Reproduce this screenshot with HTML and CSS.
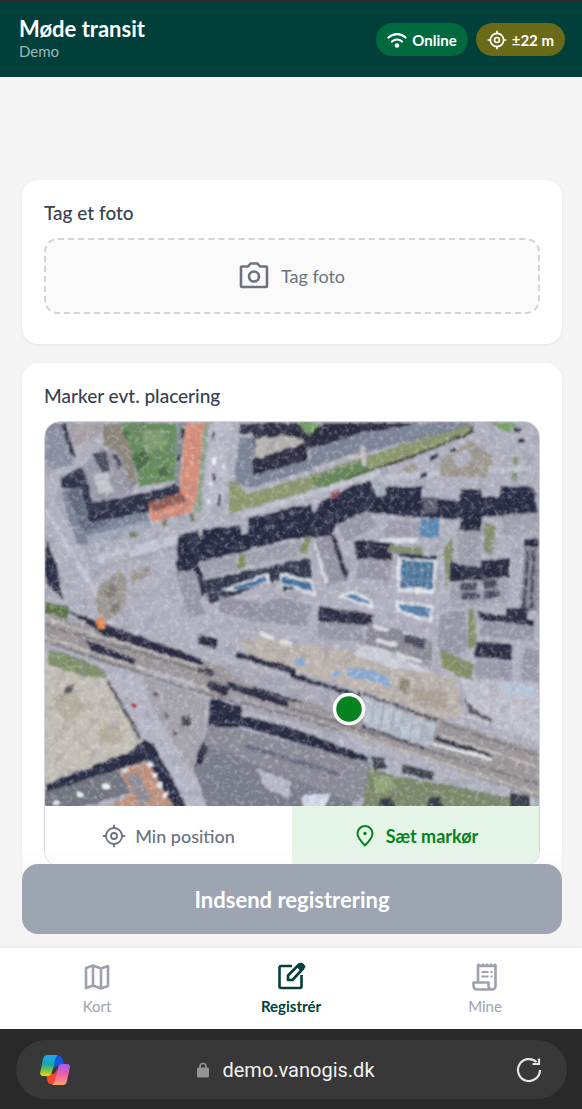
FILE: index.html
```html
<!DOCTYPE html>
<html lang="da">
<head>
    <meta charset="UTF-8">
    <meta name="viewport" content="width=device-width, initial-scale=1.0">
    <title>Møde transit</title>
    <link rel="stylesheet" href="styles.css">
</head>
<body>
    <header class="topbar">
        <div class="topbar-title">
            <h1>Møde transit</h1>
            <p>Demo</p>
        </div>
        <div class="badges">
            <span class="badge badge-online">
                <svg class="badge-icon" viewBox="0 0 20 20" fill="none" stroke="currentColor" stroke-width="2.2" stroke-linecap="round">
                    <path d="M1.5 7.5C6.5 3 13.5 3 18.500 7.500M5 11.500c3-2.700 7-2.700 10 0"/>
                    <circle cx="10" cy="15.500" r="1.200" fill="currentColor"/>
                </svg>
                Online
            </span>
            <span class="badge badge-gps">
                <svg class="badge-icon" viewBox="0 0 24 24" fill="none" stroke="currentColor" stroke-width="2" stroke-linecap="round">
                    <circle cx="12" cy="12" r="8"/><circle cx="12" cy="12" r="3"/>
                    <path d="M12 1.500V4M12 20v2.500M1.500 12H4M20 12h2.500"/>
                </svg>
                ±22 m
            </span>
        </div>
    </header>

    <div class="content">
        <main class="scroll">
            <section class="card card-photo">
                <h2>Tag et foto</h2>
                <button type="button" class="photo-btn">
                    <svg class="photo-icon" viewBox="0 0 30 30" fill="none" stroke="currentColor" stroke-width="2.600" stroke-linejoin="round">
                        <path d="M3 5.500h6l2.500-3h7l2.500 3h6a1 1 0 0 1 1 1V25a1 1 0 0 1-1 1H3a1 1 0 0 1-1-1V6.500a1 1 0 0 1 1-1z"/>
                        <circle cx="15" cy="15.500" r="5"/>
                    </svg>
                    Tag foto
                </button>
            </section>

            <section class="card">
                <h2>Marker evt. placering</h2>
                <div class="map-box">
                    <svg class="map" viewBox="45 422 494 384" preserveAspectRatio="xMidYMid slice" role="img" aria-label="Luftfoto">
                        <defs>
                            <filter id="rough" x="0" y="0" width="100%" height="100%">
                                <feTurbulence type="fractalNoise" baseFrequency="0.12" numOctaves="2" seed="4" result="n"/>
                                <feDisplacementMap in="SourceGraphic" in2="n" scale="4" xChannelSelector="R" yChannelSelector="G" result="d"/>
                                <feGaussianBlur in="d" stdDeviation="0.8"/>
                            </filter>
                            <filter id="grain" x="0" y="0" width="100%" height="100%">
                                <feTurbulence type="fractalNoise" baseFrequency="0.09" numOctaves="4" seed="9"/>
                                <feColorMatrix values="0 0 0 0 0.2  0 0 0 0 0.2  0 0 0 0 0.26  1.8 0 0 0 -0.8"/>
                            </filter>
                            <filter id="light" x="0" y="0" width="100%" height="100%">
                                <feTurbulence type="fractalNoise" baseFrequency="0.2" numOctaves="3" seed="21"/>
                                <feColorMatrix values="0 0 0 0 0.9  0 0 0 0 0.9  0 0 0 0 0.92  2 0 0 0 -0.95"/>
                            </filter>
                        </defs>
                        <g filter="url(#rough)">
                            <rect x="35" y="412" width="514" height="404" fill="#b1b2c0"/>
                            <!-- street lanes -->
                            <path stroke="#c3c5d1" stroke-width="5" fill="none" d="M90 560l90-24M45 510l80 130M130 555l50-14M240 516l140-44M380 478l150-10"/>
                            <path stroke="#a2a3b3" stroke-width="3" fill="none" d="M100 568l80-22M56 500l70 120"/>
                            <!-- north west blocks -->
                            <path fill="#8b91a3" d="M45 423h18l11 42-24 4-5-10z"/>
                            <path fill="#a9a2a9" d="M68 423h32v13l-27 11z"/>
                            <path fill="#33354c" d="M60 423h6l10 35-5-2z"/>
                            <path fill="#8d867a" d="M103 424h22l12 60-10 4-10-36-14-6z"/>
                            <path fill="#668d5b" d="M120 423h57l-2 57-35 7-10-39z"/>
                            <path fill="#809c70" d="M142 430h22l2 16-22 8z"/>
                            <path fill="#4c6a45" d="M130 456l14-6 6 10-12 12zM122 430l8 4-4 6zM158 470l8-4 4 8-10 4z"/>
                            <path fill="#2d3048" d="M60 478l23-11 12 35 55-10 27-10 6 15-33 8v7l-60 13-10-37H60z"/>
                            <path fill="#9a9aaa" d="M83 465l9 37 41-9-13-41-20-4z"/>
                            <path fill="#4b4b5c" d="M92 453l14-2 4 18-8 4zM112 455l6 14 5-2-5-14z"/>
                            <path fill="#c4c4cc" d="M94 474l14-2 5 20-15 3z"/>
                            <path fill="#7b8598" d="M60 492l20-5 10 36 57-11 3 16-63 17-10-2z"/>
                            <path fill="#9fa9b9" d="M90 535l58-14 2 7-63 17z"/>
                            <path fill="#646b7d" d="M66 491l13-3 9 34 20-3-2 6-22 8z"/>
                            <path fill="#7f8e92" d="M177 423h8l-6 65-4-2z"/>
                            <path fill="#d98f79" d="M185 423h19l-7 75-5 14-40 10-3-19 31-10z"/>
                            <path fill="#8f5d56" d="M149 502l33-9 5 8-34 11z"/>
                            <path fill="#8aa48a" d="M204 423h5l-9 90-6-1 4-20z"/>
                            <path fill="#bcbdca" d="M211 423h22l-10 80-20 10z"/>
                            <path fill="#2a2c3c" d="M212 474h3v7h-3zM218 494h3v12h-3zM181 430h3v8h-3zM178 454h3v7h-3zM213 432h2v6h-2z"/>
                            <path fill="#f2f3f6" d="M212 457h4v8h-4zM209 483h3v5h-3zM222 464h3v5h-3zM207 499h3v5h-3z"/>
                            <path fill="#76805f" d="M162 520l5-1 2 8-6 1zM188 514l6-1 2 8-6 1zM128 533l8-2 2 5-8 3z"/>
                            <!-- long block with lawn -->
                            <path fill="#8d986c" d="M229 483l8-2 8 14 60-18 65-22 100-32 4 8-105 42-80 24-60 17z"/>
                            <path fill="#648758" d="M312 477l55-17 2 12-52 16z"/>
                            <path fill="#292b40" d="M252 423h168l-60 14-50 12-56 22v-20z"/>
                            <path fill="#b7b3b0" d="M255 439l30-4 24 8-4 10-50 10z"/>
                            <path fill="#292b40" d="M253 459l55-17v20l-55 14z"/>
                            <path fill="#7b8598" d="M239 437l14-1v39l57-15v-10l50-17 80-11h30l-12 8-93 22-50 17-66 19-14-7z"/>
                            <path fill="#c2bfc2" d="M312 468l47-16 1 3-48 15zM360 446h5l2 20h-5z"/>
                            <path fill="#76a45f" d="M297 423h26l-14 12zM490 423h28l-8 10z"/>
                            <path fill="#2d3347" d="M239 424h60l-4 6-56 4z"/>
                            <path fill="#3f4a3c" d="M473 424l1 9-75 30-50 15-1-1 69-24 54-22z"/>
                            <path fill="#a09b90" d="M440 462l30-22 24 18-8 20-46-2zM402 468l12-6 4 8-16 4z"/>
                            <path fill="#b1b2c0" d="M452 456l16-8 4 12-14 8z"/>
                            <path fill="#2c2e40" d="M430 456l8-3v4l-8 5zM420 474l7-2v5l-8 3zM514 428l8-1v4l-8 1zM518 439l7-1v4l-7 1zM450 449l6-2v3l-6 2z"/>
                            <path fill="#7f9470" d="M510 456l8 2-2 10zM512 470l6 2-2 10-6-4z"/>
                            <!-- main street shadow -->
                            <path fill="#282b43" d="M178 535l20-5 2 10 3-10 37-5 2 10 6-2v-15l42-11 20-2 5 10 5-13 30-15 20-7 7 17 8-2v-8h37v10l38 4v-12h22v8h17l2-11h33l4 27-36 3-63 3-70-6-33 11-4 12-43 3-43 12-47 12-3 8-20 2z"/>
                            <path fill="#5d6072" d="M423 497h14v17h-14z"/>
                            <path fill="#9f5058" d="M331 492l8-2v6l-8 2z"/>
                            <!-- housing blocks -->
                            <path fill="#a09fae" d="M200 562l40-10 4 16-40 10z"/>
                            <path fill="#a09fae" d="M246 554l44-13h14l2 11-43 12h-10z"/>
                            <path fill="#838f62" d="M238 554h8v14h-8zM305 538h6l-4 16-8-2z"/>
                            <path fill="#33374c" d="M204 580l58-12 40-8 6 14-50 12-48 18-4-10zM284 562l26-4 3 26-30 8z"/>
                            <path fill="#dfe3ea" d="M222 590l46-17 2 10-38 8zM280 573l32 6 4 17-36-12z"/>
                            <path fill="#42709c" d="M232 588l34-12 1 6-30 8zM282 576l28 6 3 10-32-9z"/>
                            <path fill="#9695a5" d="M220 596l42 8 20-8 30 10-6 20-50-4-38-10z"/>
                            <path fill="#9897a7" d="M175 572l19-3 11 45-16 4z"/>
                            <path fill="#2b2e45" d="M195 568l5-2 6 26-4 6z"/>
                            <path fill="#9998a8" d="M337 524l31-13 9 16-32 15z"/>
                            <path fill="#9f9eae" d="M387 521h33v16l-38 1z"/>
                            <path fill="#d8dde4" d="M380 538h38v5h-38z"/>
                            <path fill="#5b88b2" d="M421 519h18v18h-19z"/>
                            <path fill="#9695a6" d="M312 542l18-7 15 45-18 6z"/>
                            <path fill="#292c43" d="M330 535l5-1 13 40-3 8zM355 540l38 3-1 17-36-1z"/>
                            <path fill="#dcdce1" d="M313 543l3-1 12 40-3 3z"/>
                            <path fill="#9a99a9" d="M358 558l34 2-2 22-33-4z"/>
                            <path fill="#868f70" d="M390 546l34 2-2 8-34-4zM444 548l8-10 2 30-8 20zM484 522l12 4-4 30-8-4z"/>
                            <path fill="#e0e6ec" d="M398 555l39 3-3 36-37-2z"/>
                            <path fill="#23304a" d="M399 553l38 3v4l-38-2z"/>
                            <path fill="#477195" d="M401 560l33 2-2 27-32-2z"/>
                            <path stroke="#7c9fba" stroke-width="1" d="M407 560v28M414 560v28M421 561v28M428 561v28M401 570h32M401 580h32"/>
                            <path fill="#262940" d="M460 516h22v15h-22zM450 563l60-5v20l-60 4z"/>
                            <path fill="#a09fae" d="M458 530l24 1-1 36-24-2z"/>
                            <path fill="#a3a2b0" d="M450 583l58-5 2 24-60 6zM502 515l36-2v20l-36 2z"/>
                            <path fill="#484b60" d="M461 583l16-1v8l-16 1zM483 581l15-1v8l-15 1zM462 593l18-1v7l-18 1zM484 591l15-1v8l-15 1z"/>
                            <path fill="#8c8b9a" d="M524 547l15-2v67h-19z"/>
                            <path stroke="#3c4056" stroke-width="3" d="M528 550l-4 60M534 550l-3 60"/>
                            <path fill="#292c43" d="M524 538h15v9h-15zM506 608h22v10h-22zM318 606l56 8-2 12-54-4z"/>
                            <path fill="#e3e8ee" d="M336 596l17-5 20 9v9zM395 600l38 5-1 17-12-2-24-8z"/>
                            <path fill="#557fab" d="M344 596l10-2 16 8v4zM398 603l32 4-1 11-28-6z"/>
                            <path fill="#9998a9" d="M318 621l44 6v16l-45-4zM440 614l25-3 3 38-23 8-8-12zM480 621l54 5v15l-54-5z"/>
                            <path fill="#2b2e44" d="M478 612l56 7v7l-54-6zM476 641l36 3v17l-38-4z"/>
                            <path fill="#9b9aaa" d="M475 660l37 3v17l-37-3zM523 649h16v33l-18-2z"/>
                            <path fill="#838f66" d="M440 650l20 8 14 8-2 14-18-6-12-6zM468 610h6l2 36-8 4z"/>
                            <!-- yards and building site -->
                            <path fill="#8b8a96" d="M368 622l26 6 38 12v26l-40-8-28-12z"/>
                            <path fill="#dcdce0" d="M374 624l16 4-4 4-14-4zM378 638l20 6-2 4-20-6zM404 632l18 4v4l-18-2zM396 652l26 8v3l-26-6z"/>
                            <path fill="#46485b" d="M404 634l22 5-2 10-20-6z"/>
                            <path fill="#bcb4ad" d="M290 643l70 9 97 28 5 37-24 1-80-28-68-20-38-10-12-20 30-3z"/>
                            <path fill="#8d8677" d="M400 678l10 2-2 14-9-4z"/>
                            <path fill="#89abd6" d="M348 668l24 2 16 8 4 10-20-8-26-4zM294 660l8-3 4 6-8 4zM330 674l10-4 2 4-10 4z"/>
                            <path fill="#ccd0d9" d="M360 643l30 8 42 22-36-4-42-14z"/>
                            <path fill="#aba195" d="M414 686l34 8-2 16-34-8z"/>
                            <path fill="#e2e2e2" d="M260 632l14 4v5l-14-5zM280 640l12 2v5l-12-4z"/>
                            <path fill="#c0c1cc" d="M462 678l76 7 1 57-70-24z"/>
                            <path fill="#b4c8dd" d="M500 684l36 4-2 8-32-6z"/>
                            <path fill="#5e575c" d="M464 697l10 12 20 12-3 3-22-12z"/>
                            <!-- plaza trees -->
                            <path fill="#9d9892" d="M98 586l22-16 8 10-4 30-18 12-12-16zM130 572l18-6 4 8-20 10z"/>
                            <path fill="#7f7a76" d="M104 590l10-6 4 8-10 6zM112 606l8-4-2 10-8 2z"/>
                            <path fill="#2b2d44" d="M45 536l12 30 6 34-18-18z"/>
                            <path fill="#5c7446" d="M45 602l24 4-2 14-22-8z"/>
                            <!-- railway -->
                            <path fill="#9c9799" d="M45 614l50 14 110 34 90 24 145 32 99 34v48l-139-50-110-34-83-22-107-32-55-20z"/>
                            <path fill="#292c43" d="M66 610l134 48 4 9-31-8-70-24zM87 640l50 20v7l-46-16zM196 664l18 6v8l-16-6zM208 680l20 6-1 11-19-8zM200 634l18 5-2 10-18-5z"/>
                            <path fill="#2b2e44" d="M236 651l60 17v7l-60-17zM228 681l60 20v7l-60-19zM252 683l50 16v5l-50-15zM290 672l70 22-2 4-68-20z"/>
                            <path fill="#a9a9b7" d="M218 660l116 30 20 14-10 10-104-32zM137 665l60 18v8l-60-20z"/>
                            <path fill="#a5a4b1" d="M230 694l110 34 10 12-120-36z"/>
                            <path stroke="#6d676d" stroke-width="1.500" fill="none" d="M45 625l170 50M45 642l160 52 90 22 244 78M290 708l249 76M440 722l99 34"/>
                            <path stroke="#c5bfbc" stroke-width="2" fill="none" d="M45 619l160 49M45 637l165 53M340 730l199 64M440 735l99 32"/>
                            <path fill="#b9c2cf" d="M363 697l74 27-8 24-66-22z"/>
                            <path stroke="#8b95a1" stroke-width="1" d="M374 701l-3 26M384 704l-4 27M394 708l-4 26M404 712l-5 26M414 716l-5 26M424 720l-5 24"/>
                            <path stroke="#3a3c4b" stroke-width="3" stroke-dasharray="4 1" d="M358 692l80 28M363 726l62 22"/>
                            <path fill="#2b2e44" d="M436 736l56 18v4l-58-18z"/>
                            <path fill="#e7e9ed" d="M430 742l62 16v3l-60-16z"/>
                            <path fill="#e38a4a" d="M96 618l6-2 3 12-7 2z"/>
                            <!-- south west corner -->
                            <path fill="#c3beb5" d="M45 652l52 16 14 14 29 58-6 9-89 36z"/>
                            <path fill="#7f9069" d="M48 650l14 2 36 14 10 12-26-2-34-12z"/>
                            <path fill="#b5b09f" d="M52 700l22-10 12 20-20 14zM100 724l20 2 4 14-24 4z"/>
                            <path fill="#55545a" d="M65 688l10-5-3 8-8 4z"/>
                            <path fill="#b5b7c5" d="M108 674l29-1 36 70 38 65h-24l-47-68z"/>
                            <path fill="#5a5963" d="M109 680l33 58-3 2-32-56z"/>
                            <path fill="#a5a3ac" d="M142 676l64 22-4 50-10 24-40-66z"/>
                            <path fill="#4a474f" d="M181 716h9l2 9-9 2zM164 712l6 4-4 3zM172 730l6 3-4 3zM154 690l4 5-5 1z"/>
                            <path fill="#b0444c" d="M132 702h4v6h-4z"/>
                            <path fill="#282c43" d="M45 785l88-35 10-10 10 3 35 65h-15l-27-47-101 32z"/>
                            <path fill="#71747f" d="M45 792l75-22 10 23-50 15H45z"/>
                            <path fill="#c0917d" d="M118 770l29-8 27 46h-70l28-14z"/>
                            <path fill="#8e8d98" d="M126 776l12-3 14 26-12 6z"/>
                            <path fill="#eef0f5" d="M53 801h6v5h-6zM77 792h6v5h-6zM103 784h6v5h-6zM147 763l5-1 2 5-5 1zM152 773h5v5h-5zM157 782h5v5h-5zM163 792h5v5h-5zM122 769h5v4h-5z"/>
                            <!-- depot -->
                            <path fill="#797b89" d="M200 745l40 8 115 44-4 12H208l-14-40z"/>
                            <path fill="#282b42" d="M210 697l32 10-3 22-31-4zM196 756l10-20 4 6-8 22-8 1zM240 715l50 12 78 29v8l-128-38z"/>
                            <path fill="#8a8b97" d="M206 724l32 6-4 24-30-8zM238 729l132 34-5 34-12 6-122-48z"/>
                            <path stroke="#626980" stroke-width="4" d="M245 746l94 28"/>
                            <path fill="#b8bac6" d="M258 768l34 14-4 16-24-10z"/>
                            <path fill="#7b8869" d="M368 768l32 9 40 6 85 18v8H362z"/>
                            <path fill="#383c46" d="M371 756l14 2 2 10-14 2zM402 764l32 8v8l-32-7zM380 799l12-2 4 12h-18zM428 797h12l4 12h-18zM510 792l20 4v12h-20z"/>
                            <path fill="#8fa577" d="M372 776l20 2 6 10-20 6z"/>
                            <path fill="#d5dcee" d="M304 794h26l-6 14h-22z"/>
                        </g>
                        <rect x="45" y="422" width="494" height="384" filter="url(#grain)" opacity="0.4"/>
                        <rect x="45" y="422" width="494" height="384" filter="url(#light)" opacity="0.4"/>
                        <circle cx="349" cy="709" r="14.500" fill="#07821f" stroke="#fff" stroke-width="3.500"/>
                    </svg>
                    <div class="map-actions">
                        <button type="button" class="map-btn">
                            <svg class="map-icon" viewBox="0 0 24 24" fill="none" stroke="currentColor" stroke-width="1.800" stroke-linecap="round">
                                <circle cx="12" cy="12" r="8"/><circle cx="12" cy="12" r="3"/>
                                <path d="M12 1.500V4M12 20v2.500M1.500 12H4M20 12h2.500"/>
                            </svg>
                            Min position
                        </button>
                        <button type="button" class="map-btn active">
                            <svg class="map-icon" viewBox="0 0 24 24" fill="none" stroke="currentColor" stroke-width="2" stroke-linejoin="round">
                                <path d="M12 21.500C8 17.500 4.500 13.500 4.500 9.500a7.500 7.500 0 0 1 15 0c0 4-3.500 8-7.500 12z"/>
                                <circle cx="12" cy="9.500" r="1.700" fill="currentColor" stroke="none"/>
                            </svg>
                            Sæt markør
                        </button>
                    </div>
                </div>
            </section>
        </main>
        <div class="submit-bar">
            <button type="button" class="submit-btn">Indsend registrering</button>
        </div>
    </div>

    <nav class="tabs">
        <a href="#kort" class="tab">
            <svg class="tab-icon" viewBox="0 0 30 30" fill="none" stroke="currentColor" stroke-width="2.600" stroke-linejoin="round">
                <path d="M4 6l7-2.500 8 3 7-2.500v20l-7 2.500-8-3L4 26zM11 3.500v20M19 6.500v20"/>
            </svg>
            Kort
        </a>
        <a href="#registrer" class="tab active">
            <svg class="tab-icon" viewBox="0 0 30 30" fill="none" stroke="currentColor" stroke-width="2.600" stroke-linejoin="round">
                <path d="M16 4H5a1.500 1.500 0 0 0-1.500 1.500v19A1.500 1.500 0 0 0 5 26h19a1.500 1.500 0 0 0 1.500-1.500V13"/>
                <path d="M12 18v-4.500L23 2.500l4 4L16.500 18z"/>
                <path d="M21 4.500L24 1.500a2 2 0 0 1 2.500 0l2 2a2 2 0 0 1 0 2.500L25 9z" fill="currentColor" stroke-width="1"/>
            </svg>
            Registrér
        </a>
        <a href="#mine" class="tab">
            <svg class="tab-icon" viewBox="0 0 30 30" fill="none" stroke="currentColor" stroke-width="2.600" stroke-linejoin="round">
                <path d="M8 20.500V4h17.500v20a3.500 3.500 0 0 1-3.500 3.500H7A3.500 3.500 0 0 1 3.500 24v-3.500h15V24a3.500 3.500 0 0 0 3.500 3.500"/>
                <path d="M7 4l1.500-2L11 4l2-2 2 2 2-2 2 2 2-2 2 2 2-2 1.500 2" stroke-width="1.400"/>
                <path d="M11.500 10h7M11.500 14.500h7M20.500 10h2M20.500 14.500h2" stroke-width="2"/>
            </svg>
            Mine
        </a>
    </nav>

    <footer class="browser">
        <div class="address">
            <svg class="copilot" viewBox="0 0 32 32">
                <defs>
                    <linearGradient id="cpA" x1="0" y1="0" x2="0" y2="1">
                        <stop offset="0" stop-color="#18a9f5"/><stop offset="0.45" stop-color="#1aa6a8"/>
                        <stop offset="0.75" stop-color="#7fc241"/><stop offset="1" stop-color="#f7d21c"/>
                    </linearGradient>
                    <linearGradient id="cpB" x1="0" y1="0" x2="0" y2="1">
                        <stop offset="0" stop-color="#a957f0"/><stop offset="0.5" stop-color="#ee5fa8"/>
                        <stop offset="1" stop-color="#ffa06a"/>
                    </linearGradient>
                </defs>
                <path fill="#1557d8" d="M15 2h5c2 0 3 1 3.500 3l2 7h-6c-3 0-5 2-6 5z"/>
                <path fill="#f04a2c" d="M17 30h-5c-2 0-3-1-3.500-3L7 20h6c3 0 4-2 5-5z"/>
                <path fill="url(#cpA)" d="M8 1h12c-2 0-3 1.500-4 5l-3 12c-.8 3-2 4-4.500 4H4.500C1.500 22 .5 20 1.500 17L4 5c.7-2.700 2-4 4-4z"/>
                <path fill="url(#cpB)" d="M24 31H12c2 0 3-1.500 4-5l3-12c.8-3 2-4 4.500-4h4c3 0 4 2 3 5l-2.500 12c-.7 2.700-2 4-4 4z"/>
            </svg>
            <button type="button" class="url">
                <svg class="lock" viewBox="0 0 12 16">
                    <path d="M3 7V4.500a3 3 0 0 1 6 0V7" fill="none" stroke="currentColor" stroke-width="1.600"/>
                    <rect y="5.500" width="12" height="10" rx="1.500" fill="currentColor"/>
                </svg>
                demo.vanogis.dk
            </button>
            <button type="button" class="reload" aria-label="Genindlæs">
                <svg class="reload-icon" viewBox="0 0 26 26" fill="none" stroke="currentColor" stroke-width="2.200">
                    <path d="M24 13A11 11 0 1 1 20.500 5"/>
                    <path d="M16.500 7H23V1.500"/>
                </svg>
            </button>
        </div>
    </footer>
</body>
</html>
```
FILE: styles.css
```css
* {
    box-sizing: border-box;
}

body {
    margin: 0;
    height: 100vh;
    display: flex;
    flex-direction: column;
    background: #f4f4f4;
    font-family: Lato, "Noto Sans", sans-serif;
    color: #374151;
}

h1, h2, p {
    margin: 0;
}

button {
    font-family: inherit;
    border: none;
    cursor: pointer;
}

svg {
    flex: none;
}

.topbar {
    display: flex;
    justify-content: space-between;
    align-items: center;
    height: 77px;
    padding: 0 17px 0 19px;
    border-top: 2px solid #2c2a2c;
    background: #003f3a;
    color: #fff;
}

.topbar h1 {
    font-size: 22px;
    line-height: 24px;
    font-weight: 700;
}

.topbar p {
    padding-bottom: 2px;
    font-size: 15px;
    line-height: 20px;
    color: #9dbab7;
}

.badges {
    display: flex;
    gap: 8px;
}

.badge {
    display: flex;
    align-items: center;
    gap: 5px;
    height: 33px;
    padding: 0 11px;
    border-radius: 17px;
    font-size: 15px;
    font-weight: 700;
}

.badge-icon {
    width: 20px;
    height: 20px;
}

.badge-online {
    background: #006a3e;
}

.badge-gps {
    background: #6a6a19;
}

.content {
    position: relative;
    flex: 1;
    min-height: 0;
}

.scroll {
    height: 100%;
    overflow: hidden;
    padding: 103px 20px 0 22px;
}

.card {
    margin-bottom: 19px;
    padding: 20px 22px;
    border-radius: 16px;
    background: #fff;
    box-shadow: 0 1px 3px rgba(0, 0, 0, 0.08);
}

.card-photo {
    padding-bottom: 30px;
}

.card h2 {
    margin-bottom: 12px;
    font-size: 19px;
    line-height: 26px;
    font-weight: 500;
}

.photo-btn {
    display: flex;
    justify-content: center;
    align-items: center;
    gap: 12px;
    width: 100%;
    height: 76px;
    border: 2px dashed #d1d5db;
    border-radius: 14px;
    background: #fafafb;
    color: #6b7280;
    font-size: 18px;
}

.photo-icon {
    width: 30px;
    height: 30px;
}

.map-box {
    overflow: hidden;
    border: 1px solid #d1d5db;
    border-radius: 16px;
}

.map {
    display: block;
    width: 100%;
    height: 384px;
}

.map-actions {
    display: grid;
    grid-template-columns: 1fr 1fr;
}

.map-btn {
    display: flex;
    justify-content: center;
    align-items: center;
    gap: 9px;
    height: 60px;
    background: #fff;
    color: #6b7280;
    font-size: 18px;
    font-weight: 500;
}

.map-btn.active {
    background: #e4f4e7;
    color: #07821f;
    font-weight: 700;
}

.map-icon {
    width: 24px;
    height: 24px;
}

.submit-bar {
    position: absolute;
    left: 0;
    right: 0;
    bottom: 0;
    padding: 16px 20px 14px 22px;
    background: linear-gradient(to top, #f4f4f4 50%, rgba(244, 244, 244, 0));
}

.submit-btn {
    display: block;
    width: 100%;
    height: 70px;
    border-radius: 16px;
    background: #9ca5b1;
    color: #fff;
    font-size: 22px;
    font-weight: 700;
}

.tabs {
    position: relative;
    display: grid;
    grid-template-columns: repeat(3, 1fr);
    height: 81px;
    background: #fff;
    box-shadow: 0 -1px 2px rgba(0, 0, 0, 0.08);
}

.tab {
    display: flex;
    flex-direction: column;
    align-items: center;
    gap: 4px;
    padding-top: 14px;
    color: #9ca3af;
    font-size: 15px;
    line-height: 20px;
    text-decoration: none;
}

.tab.active {
    color: #003f3a;
    font-weight: 700;
}

.tab-icon {
    width: 30px;
    height: 30px;
}

.browser {
    height: 80px;
    padding: 11px 15px 10px 16px;
    background: #292929;
}

.address {
    display: flex;
    justify-content: space-between;
    align-items: center;
    height: 59px;
    padding: 0 10px 0 23px;
    border-radius: 30px;
    background: #383838;
}

.copilot {
    width: 32px;
    height: 32px;
}

.url {
    display: flex;
    align-items: center;
    gap: 13px;
    padding: 0;
    background: none;
    color: #f1f1f1;
    font-family: Roboto, sans-serif;
    font-size: 20px;
}

.lock {
    width: 12px;
    height: 16px;
    color: #949494;
}

.reload {
    display: flex;
    justify-content: center;
    align-items: center;
    width: 56px;
    height: 56px;
    background: none;
    color: #e4e4e4;
}

.reload-icon {
    width: 26px;
    height: 26px;
}
```
